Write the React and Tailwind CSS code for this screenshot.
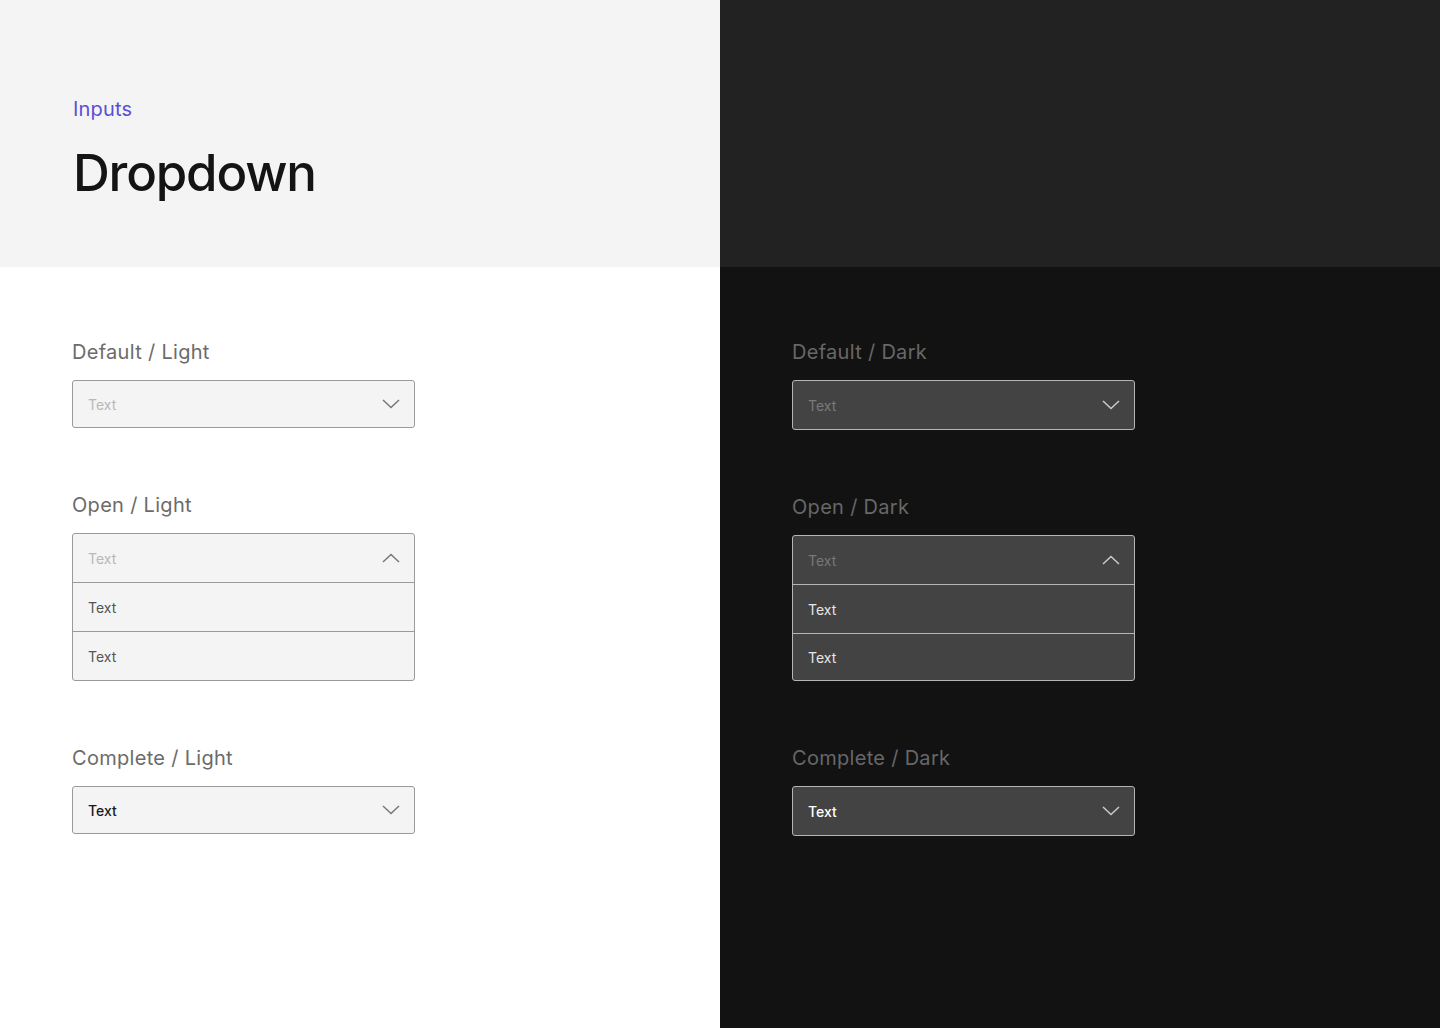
import React from "react";

const Chevron = ({ up, color }) => (
  <svg width="18" height="10" viewBox="0 0 18 10" fill="none" className="shrink-0">
    {up ? (
      <path d="M1 9L9 1.5L17 9" stroke={color} strokeWidth="1.6" />
    ) : (
      <path d="M1 1L9 8.5L17 1" stroke={color} strokeWidth="1.6" />
    )}
  </svg>
);

const font = { fontFamily: "Inter, 'Liberation Sans', sans-serif" };

function Label({ children, dark }) {
  return (
    <div
      className={`text-[20px] leading-[28px] tracking-[0.3px] ${dark ? "text-[#676767]" : "text-[#6b6b6b]"}`}
    >
      {children}
    </div>
  );
}

function Section({ label, dark, children, mt }) {
  return (
    <div className={`flex flex-col ${mt}`}>
      <Label dark={dark}>{label}</Label>
      <div className="mt-[14px]">{children}</div>
    </div>
  );
}

function LightBox({ text, textColor, up }) {
  return (
    <div className="w-[343px] h-[48px] rounded-[3px] border border-[#9a9a9a] bg-[#f4f4f4] flex items-center justify-between pl-[15px] pr-[14px]">
      <span className={`text-[14px] ${textColor}`}>{text}</span>
      <Chevron up={up} color="#7a7a7a" />
    </div>
  );
}

function DarkBox({ text, textColor, up }) {
  return (
    <div className="w-[343px] h-[50px] rounded-[3px] border border-[#b5b5b5] bg-[#434343] flex items-center justify-between pl-[15px] pr-[14px]">
      <span className={`text-[14px] ${textColor}`}>{text}</span>
      <Chevron up={up} color="#c8c8c8" />
    </div>
  );
}

function LightOpen() {
  return (
    <div className="w-[343px] rounded-[3px] border border-[#9a9a9a] bg-[#f4f4f4] flex flex-col">
      <div className="h-[49px] flex items-center justify-between pl-[15px] pr-[14px] border-b border-[#9a9a9a]">
        <span className="text-[14px] text-[#b8b8b8]">Text</span>
        <Chevron up color="#7a7a7a" />
      </div>
      <div className="h-[49px] flex items-center pl-[15px] border-b border-[#9a9a9a]">
        <span className="text-[14px] text-[#555]">Text</span>
      </div>
      <div className="h-[48px] flex items-center pl-[15px]">
        <span className="text-[14px] text-[#555]">Text</span>
      </div>
    </div>
  );
}

function DarkOpen() {
  return (
    <div className="w-[343px] rounded-[3px] border border-[#b5b5b5] bg-[#434343] flex flex-col">
      <div className="h-[49px] flex items-center justify-between pl-[15px] pr-[14px] border-b border-[#b5b5b5]">
        <span className="text-[14px] text-[#777]">Text</span>
        <Chevron up color="#c8c8c8" />
      </div>
      <div className="h-[49px] flex items-center pl-[15px] border-b border-[#b5b5b5]">
        <span className="text-[14px] text-[#e6e6e6]">Text</span>
      </div>
      <div className="h-[46px] flex items-center pl-[15px]">
        <span className="text-[14px] text-[#e6e6e6]">Text</span>
      </div>
    </div>
  );
}

export default function App() {
  return (
    <div className="w-[1440px] h-[1028px] flex overflow-hidden" style={font}>
      <div className="w-[720px] flex flex-col bg-white">
        <div className="h-[267px] bg-[#f4f4f4] pl-[73px] pt-[95px]">
          <div className="text-[20px] leading-[28px] text-[#5b4fd7] tracking-[0.2px]">Inputs</div>
          <div className="mt-[20px] text-[51px] leading-[60px] font-medium text-[#141414] tracking-[-1.2px]">
            Dropdown
          </div>
        </div>
        <div className="pl-[72px] pt-[71px] flex flex-col">
          <Section label="Default / Light" mt="">
            <LightBox text="Text" textColor="text-[#b8b8b8]" />
          </Section>
          <Section label="Open / Light" mt="mt-[63px]">
            <LightOpen />
          </Section>
          <Section label="Complete / Light" mt="mt-[63px]">
            <LightBox text="Text" textColor="text-[#1a1a1a] font-medium" />
          </Section>
        </div>
      </div>
      <div className="w-[720px] flex flex-col bg-[#121212]">
        <div className="h-[267px] bg-[#222222]" />
        <div className="pl-[72px] pt-[71px] flex flex-col">
          <Section label="Default / Dark" dark mt="">
            <DarkBox text="Text" textColor="text-[#7a7a7a]" />
          </Section>
          <Section label="Open / Dark" dark mt="mt-[63px]">
            <DarkOpen />
          </Section>
          <Section label="Complete / Dark" dark mt="mt-[63px]">
            <DarkBox text="Text" textColor="text-white font-medium" />
          </Section>
        </div>
      </div>
    </div>
  );
}
